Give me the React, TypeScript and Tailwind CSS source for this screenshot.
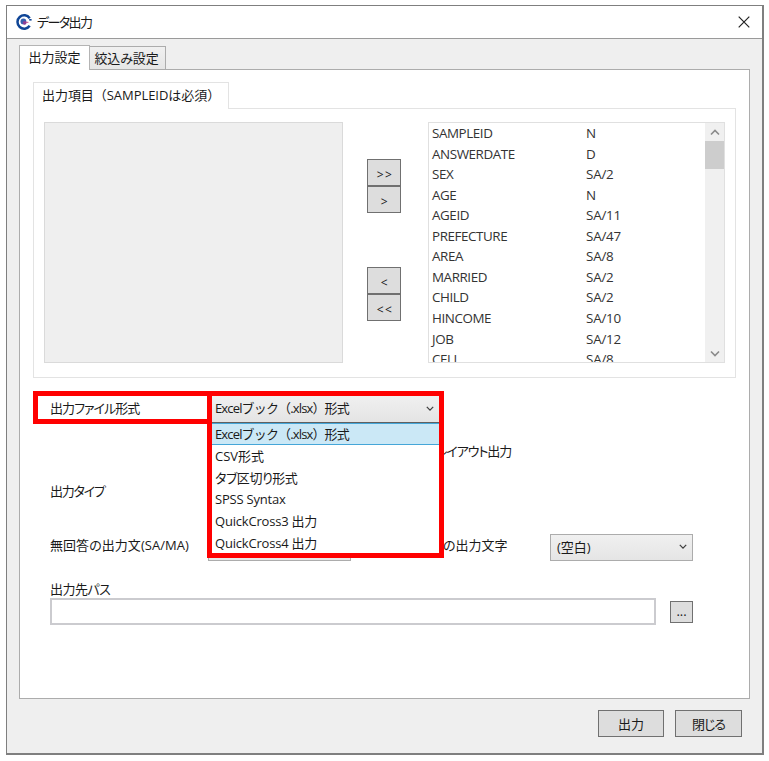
import type { ReactNode } from 'react';

const VARIABLES: { name: string; type: string }[] = [
  { name: 'SAMPLEID', type: 'N' },
  { name: 'ANSWERDATE', type: 'D' },
  { name: 'SEX', type: 'SA/2' },
  { name: 'AGE', type: 'N' },
  { name: 'AGEID', type: 'SA/11' },
  { name: 'PREFECTURE', type: 'SA/47' },
  { name: 'AREA', type: 'SA/8' },
  { name: 'MARRIED', type: 'SA/2' },
  { name: 'CHILD', type: 'SA/2' },
  { name: 'HINCOME', type: 'SA/10' },
  { name: 'JOB', type: 'SA/12' },
  { name: 'CELL', type: 'SA/8' },
];

// full-width brackets keep their own side space, so these lines turn palt off
const FORMATS = [
  { label: 'Excelブック（.xlsx）形式', className: "tracking-[-0.85px] [font-feature-settings:'palt'_0]" },
  { label: 'CSV形式', className: 'tracking-[0px]' },
  { label: 'タブ区切り形式', className: 'tracking-[-0.45px]' },
  { label: 'SPSS Syntax', className: 'tracking-[-0.2px]' },
  { label: 'QuickCross3 出力', className: 'tracking-[-0.2px]' },
  { label: 'QuickCross4 出力', className: 'tracking-[-0.2px]' },
];

function Chevron({ up = false, className = '' }: { up?: boolean; className?: string }) {
  return (
    <svg width="10" height="7" viewBox="0 0 10 7" fill="none" className={className} aria-hidden>
      <path d={up ? 'M1 5.5 5 1.5 9 5.5' : 'M1 1.5 5 5.5 9 1.5'} stroke="currentColor" strokeWidth="1.6" />
    </svg>
  );
}

function Logo() {
  return (
    <svg width="16" height="16" viewBox="0 0 16 16" fill="none" aria-hidden>
      <path d="M13.7 4.2A6.7 6.7 0 1 0 13.7 11.8" stroke="#0f4596" strokeWidth="2.5" />
      <circle cx="7.4" cy="7.4" r="2.9" fill="#3560b0" />
      <circle cx="8.6" cy="8.8" r="1.9" fill="#8a3f96" />
      <path d="M9.8 8.3h2.6" stroke="#c04a86" strokeWidth="1" />
      <path d="M13.2 5.8h2.4" stroke="#0f4596" strokeWidth="1.6" />
    </svg>
  );
}

function Button({ children, className = '' }: { children: ReactNode; className?: string }) {
  return (
    <button className={`grid place-items-center border border-[#707070] bg-[#dddddd] ${className}`}>
      {children}
    </button>
  );
}

// pair of stacked buttons that move items between the two lists
function MovePair({ labels }: { labels: string[] }) {
  return (
    <div className="flex flex-col text-[12px] font-medium tracking-[1.5px]">
      {labels.map((l) => (
        <Button key={l} className="h-[27px] w-[34px] pt-1 pl-[2px]">
          {l}
        </Button>
      ))}
    </div>
  );
}

function OutputItems() {
  return (
    <section className="flex flex-col">
      <div className="z-10 flex h-[27px] w-[196px] items-center border border-b-0 border-[#e3e3e3] bg-white pb-[2px] pl-[8px]">
        <span className="tracking-[-0.05px] [font-feature-settings:'palt'_0]">出力項目（SAMPLEIDは必須）</span>
      </div>
      <div className="-mt-px flex h-[270px] w-[703px] items-start border border-[#e3e3e3] pt-[13px] pl-[10px]">
        <div className="h-[241px] w-[299px] border border-[#dadada] bg-[#efefef]" />
        <div className="ml-[24px] flex flex-col gap-[54px] pt-[37px]">
          <MovePair labels={['>>', '>']} />
          <MovePair labels={['<', '<<']} />
        </div>
        <div className="ml-[27px] flex h-[241px] w-[297px] border border-[#e0e0e0]">
          <ul className="flex-1 overflow-hidden text-[13.4px] text-[#333]">
            {VARIABLES.map((v) => (
              <li key={v.name} className="flex h-[20.55px] items-center pt-px pl-[3px]">
                <span className="w-[154px] tracking-[-0.42px]">{v.name}</span>
                <span className="tracking-[-0.2px]">{v.type}</span>
              </li>
            ))}
          </ul>
          <div className="flex w-[19px] flex-col items-center bg-[#f0f0f0] text-[#8a8a8a]">
            <div className="grid h-[18px] place-items-center">
              <Chevron up />
            </div>
            <div className="h-[28px] w-full bg-[#cdcdcd]" />
            <div className="mt-auto grid h-[18px] place-items-center">
              <Chevron />
            </div>
          </div>
        </div>
      </div>
    </section>
  );
}

// format selector, shown open with its list over the rows beneath
function FormatSelect() {
  return (
    <div className="absolute top-0 left-0 z-20 h-[167px] w-[237px] border-5 border-[#ff0000] bg-white">
      <div className="flex h-[26px] items-center justify-between bg-linear-to-b from-[#f0f0f0] to-[#e4e4e4] pr-[4px] pb-[2px] pl-[3px]">
        <span className={FORMATS[0].className}>{FORMATS[0].label}</span>
        <Chevron className="scale-80 text-[#404040]" />
      </div>
      <ul className="border-t border-[#606060]">
        {FORMATS.map((f, i) => (
          <li
            key={f.label}
            className={`flex h-[21.7px] items-center border-y pt-[2px] pl-[3px] ${
              i === 0 ? 'border-[#45a6d8] bg-[#cbe8f6]' : 'border-transparent'
            }`}
          >
            <span className={f.className}>{f.label}</span>
          </li>
        ))}
      </ul>
    </div>
  );
}

export default function App() {
  return (
    <div className="h-[761px] w-[769px] overflow-hidden bg-white pt-[5px] pl-[6px] font-['Open_Sans','Noto_Sans_CJK_JP',sans-serif] text-[13px] leading-none whitespace-nowrap text-[#1a1a1a] [font-feature-settings:'palt']">
      <div className="flex h-[750px] w-[758px] flex-col border border-r-2 border-b-2 border-[#7f7f7f] bg-[#efefef]">
        <header className="flex h-[33px] shrink-0 items-center border-b border-[#9a9a9a] bg-white pr-[12px] pl-[9px]">
          <Logo />
          <h1 className="ml-[5px] tracking-[-1.6px]">データ出力</h1>
          <svg width="12" height="12" viewBox="0 0 12 12" className="ml-auto" aria-label="閉じる">
            <path d="M.7.7 11.3 11.3M11.3.7.7 11.3" stroke="#222" strokeWidth="1.2" />
          </svg>
        </header>

        <div className="flex h-[30px] items-end pt-[6px] pl-[12px]">
          <div className="z-10 -mb-px flex h-[25px] w-[71px] items-center justify-center border border-b-0 border-[#b4b4b4] bg-white pb-[2px]">
            出力設定
          </div>
          <div className="-ml-px flex h-[23px] w-[77px] items-center justify-center border border-b-0 border-[#acacac] bg-linear-to-b from-[#f0f0f0] to-[#e6e6e6] pr-[2px] tracking-[-0.1px]">
            絞込み設定
          </div>
        </div>

        <main className="ml-[12px] flex h-[630px] w-[731px] shrink-0 flex-col border border-[#acacac] bg-white pt-[12px] pl-[13px]">
          <OutputItems />

          <div className="mt-[13px] flex h-[33px]">
            <div className="flex w-[174px] items-center border-5 border-r-0 border-[#ff0000] pt-px pl-[12px]">
              <span className="tracking-[-0.95px]">出力ファイル形式</span>
            </div>
            <div className="relative w-[237px]">
              <FormatSelect />
            </div>
          </div>

          <div className="mt-[17px] flex h-[20px] items-center pl-[403px]">
            <span className="tracking-[-1.1px]">レイアウト出力</span>
          </div>
          <div className="mt-[21px] flex h-[20px] items-center pb-px pl-[17px]">
            <span className="tracking-[-1.2px]">出力タイプ</span>
          </div>
          <div className="mt-[32px] flex h-[27px] items-center pl-[17px]">
            <span className="w-[158px] pb-[4px] tracking-[0.05px]">無回答の出力文(SA/MA)</span>
            <div className="h-[27px] w-[143px] border border-[#acacac] bg-[#e8e8e8]" />
            <span className="ml-[92px] w-[107px] pb-[4px]">の出力文字</span>
            <div className="flex h-[27px] w-[143px] items-center justify-between border border-[#acacac] bg-linear-to-b from-[#f0f0f0] to-[#e5e5e5] pr-[4px] pl-[6px]">
              (空白)
              <Chevron className="mb-[3px] scale-80 text-[#404040]" />
            </div>
          </div>
          <div className="mt-[21px] flex h-[16px] items-center pb-[2px] pl-[17px]">
            <span className="tracking-[-0.5px]">出力先パス</span>
          </div>
          <div className="flex h-[27px] items-center pl-[17px]">
            <div className="h-[27px] w-[606px] border-2 border-[#cbcbcf]" />
            <Button className="ml-[14px] h-[22px] w-[23px]">...</Button>
          </div>
        </main>

        <footer className="mt-[11px] flex justify-end gap-[11px] pr-[20px]">
          <Button className="h-[27px] w-[66px] pt-px">出力</Button>
          <Button className="h-[27px] w-[67px] pt-px tracking-[-1px]">閉じる</Button>
        </footer>
      </div>
    </div>
  );
}
